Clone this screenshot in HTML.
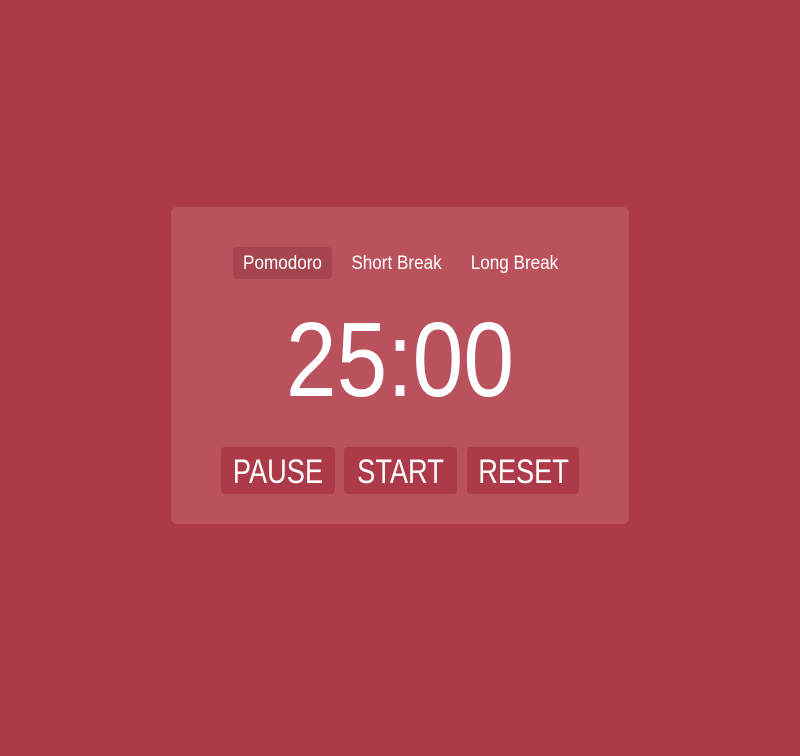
<!DOCTYPE html>
<html><head><style>
html,body{margin:0;padding:0}
body{width:800px;height:756px;background:#ad3a48;position:relative;overflow:hidden;font-family:"Liberation Sans",sans-serif;color:#fff}
.card{position:absolute;left:171px;top:207px;width:458px;height:317px;background:#b9525d;border-radius:6px}
.a{position:absolute;white-space:nowrap;text-align:center}
.t{font-size:19px;transform:scaleX(.9);transform-origin:center}
.tab{position:absolute;left:233px;top:247px;width:99px;height:32px;background:#a6454f;border-radius:4px}
.btn{position:absolute;top:447px;height:47px;background:#ad3a48;border-radius:4px}
.bt{font-size:34px;transform:scaleX(.8);top:452px;line-height:40px}
</style></head><body>
<div class="card"></div>
<div class="tab"></div>
<div class="a t" style="left:233px;width:99px;top:253px;line-height:22px">Pomodoro</div>
<div class="a t" style="left:340px;width:113px;top:253px;line-height:22px">Short Break</div>
<div class="a t" style="left:460px;width:109px;top:253px;line-height:22px">Long Break</div>
<div class="a" style="left:200px;width:400px;top:302px;font-size:106px;line-height:116px;transform:scaleX(.86)">25:00</div>
<div class="btn" style="left:221px;width:114px"></div>
<div class="btn" style="left:344px;width:113px"></div>
<div class="btn" style="left:467px;width:112px"></div>
<div class="a bt" style="left:221px;width:114px">PAUSE</div>
<div class="a bt" style="left:344px;width:113px">START</div>
<div class="a bt" style="left:467px;width:112px">RESET</div>
</body></html>
